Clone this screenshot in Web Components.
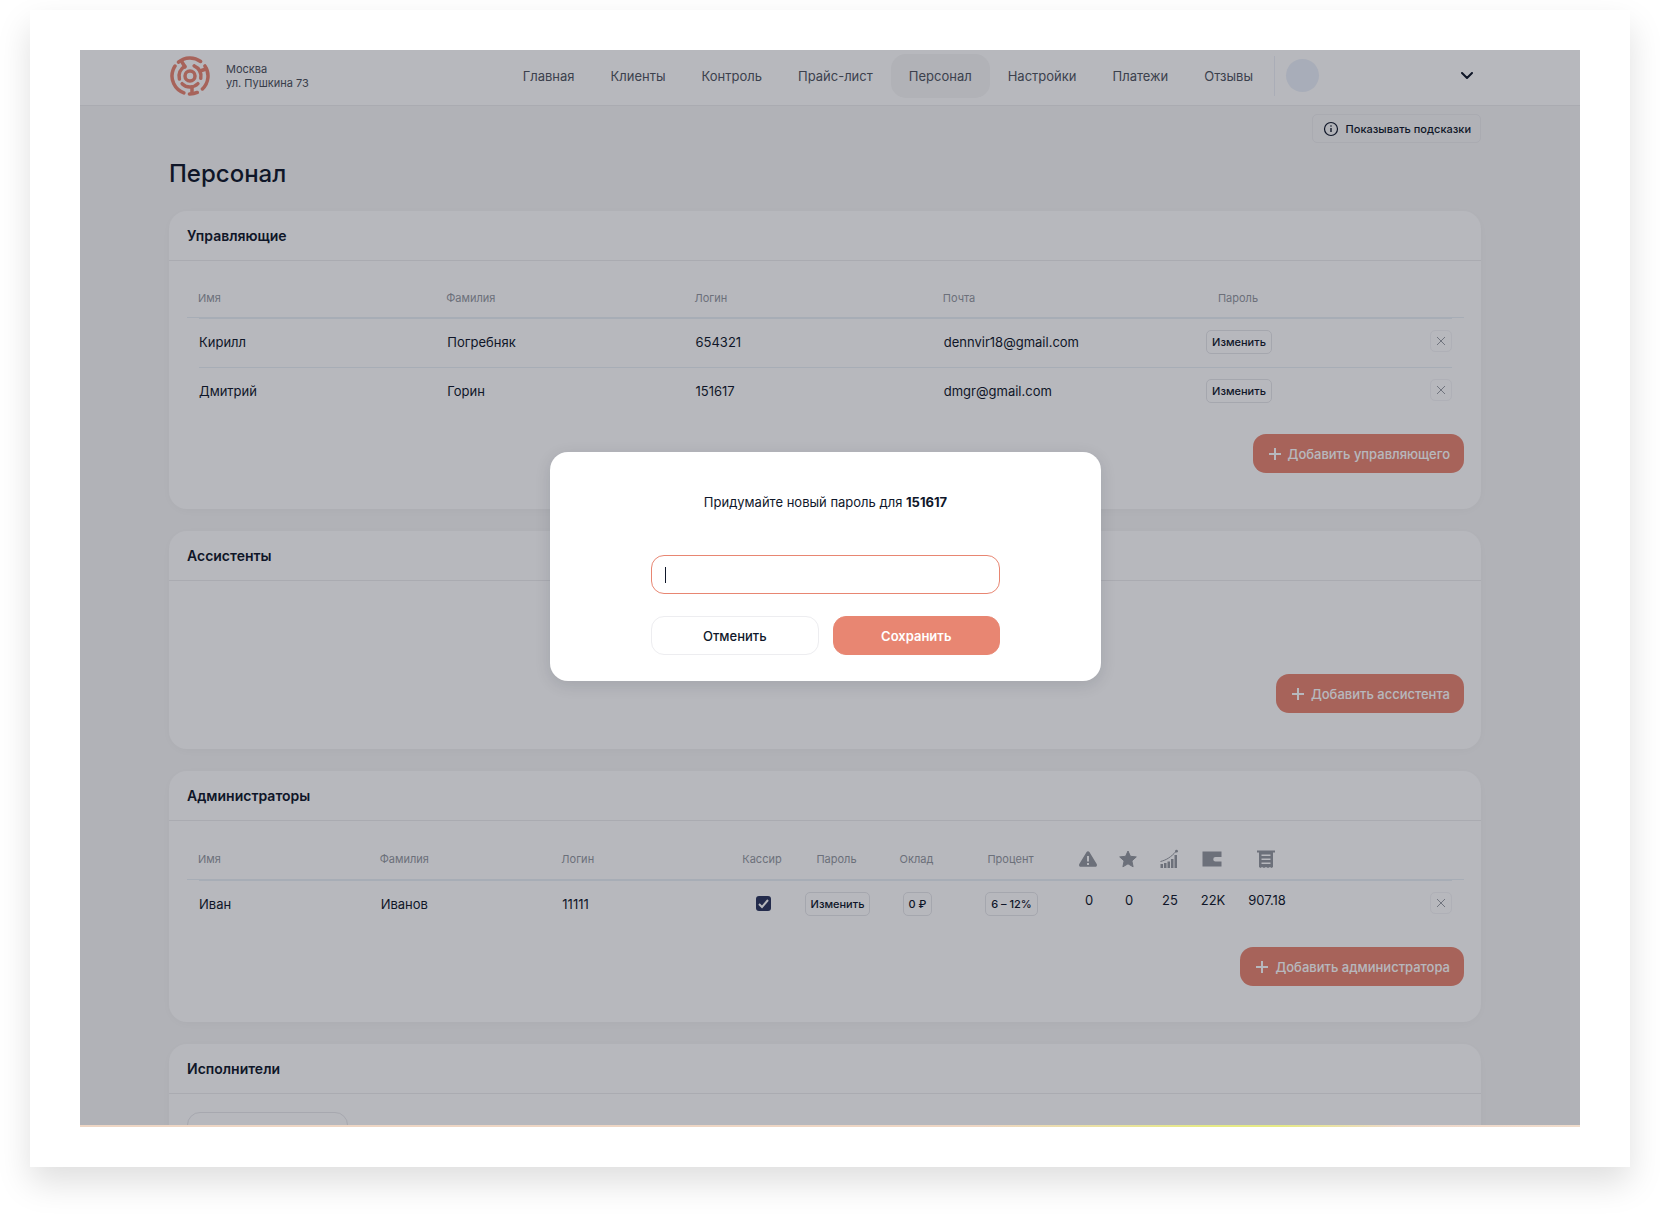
<!DOCTYPE html>
<html lang="ru">
<head>
<meta charset="utf-8">
<meta name="viewport" content="width=device-width, initial-scale=1">
<title>Персонал</title>
<style>
  :root {
    --ink: #0f172a;
    --muted: #94989f;
    --line: #ececee;
    --row-line: #e9eff5;
    --accent: #e88672;
  }

  body {
    margin: 0;
    background: #fff;
    color: var(--ink);
    font: 13px/20px Inter, "Noto Sans", sans-serif;
  }
</style>
</head>
<body>
<app-frame>
  <top-bar city="Москва" street="ул. Пушкина 73">
    <nav-item>Главная</nav-item>
    <nav-item>Клиенты</nav-item>
    <nav-item>Контроль</nav-item>
    <nav-item>Прайс-лист</nav-item>
    <nav-item active>Персонал</nav-item>
    <nav-item>Настройки</nav-item>
    <nav-item>Платежи</nav-item>
    <nav-item>Отзывы</nav-item>
  </top-bar>

  <staff-page heading="Персонал">
    <staff-card heading="Управляющие">
      <manager-table></manager-table>
      <add-button slot="action">Добавить управляющего</add-button>
    </staff-card>
    <staff-card heading="Ассистенты" empty>
      <add-button slot="action">Добавить ассистента</add-button>
    </staff-card>
    <staff-card heading="Администраторы">
      <admin-table></admin-table>
      <add-button slot="action">Добавить администратора</add-button>
    </staff-card>
    <staff-card heading="Исполнители">
      <search-field></search-field>
    </staff-card>
  </staff-page>

  <password-dialog slot="dialog" login="151617"></password-dialog>
</app-frame>

<script>
const closeIcon = `
  <svg width="10" height="10" viewBox="0 0 10 10" fill="none" stroke="currentColor" aria-hidden="true">
    <path d="M1 1l8 8M9 1L1 9"/>
  </svg>`;

const tableStyles = `
  :host { display: block; }

  table, thead, tbody { display: block; }

  tr {
    display: grid;
    grid-template-columns: var(--columns);
    align-items: center;
  }

  thead tr {
    height: var(--head-height, 38px);
    padding: 0 13px 0 11px;
    border-bottom: 1px solid var(--row-line);
  }

  tbody tr {
    height: 45px;
    margin: 0 12px;
    padding-bottom: 3px;
    border-top: 1px solid var(--row-line);
  }

  th, td {
    padding: 0;
    text-align: left;
    white-space: nowrap;
  }

  th {
    color: var(--muted);
    font-size: 11px;
    font-weight: 400;
  }

  th svg { display: block; margin: 0 auto; }

  .center { justify-self: center; text-align: center; }
  .end { justify-self: end; padding-bottom: 2px; }

  button {
    display: block;
    box-sizing: border-box;
    height: 24px;
    padding: 0 5px;
    border: 1px solid #e6e7ea;
    border-radius: 5px;
    background: none;
    color: var(--ink);
    font: 500 11px/20px Inter, "Noto Sans", sans-serif;
  }

  button.remove {
    display: grid;
    place-items: center;
    width: 22px;
    height: 22px;
    padding: 0;
    border-color: #f4f4f6;
    color: #9a9ea5;
  }
`;

class AppFrame extends HTMLElement {
  constructor() {
    super();
    this.attachShadow({ mode: 'open' }).innerHTML = `
      <style>
        :host {
          display: block;
          box-sizing: border-box;
          height: calc(100vh - 60px);
          margin: 10px 30px 50px;
          padding: 40px 50px;
          background: #fff;
          box-shadow: 0 16px 32px rgba(0, 0, 0, .13);
        }

        .screen {
          position: relative;
          box-sizing: border-box;
          height: 100%;
          overflow: hidden;
          background: #f7f7f7;
        }

        .overlay {
          position: absolute;
          inset: 0;
          display: grid;
          place-items: center;
          padding: 0 9px 44px 0;
          background: rgba(15, 20, 36, .3);
        }

        .strip {
          position: absolute;
          inset: auto 0 0 0;
          height: 2px;
          background: linear-gradient(90deg, #eed6c4 0%, #eed6c4 60%, #e6ea86 75%, #e6ea86 80%, #eed8cc 88%, #f0dccb 100%);
        }
      </style>
      <div class="screen">
        <slot></slot>
        <div class="overlay"><slot name="dialog"></slot></div>
        <div class="strip"></div>
      </div>
    `;
  }
}

class TopBar extends HTMLElement {
  constructor() {
    super();
    this.attachShadow({ mode: 'open' }).innerHTML = `
      <style>
        :host { display: block; }

        header {
          display: flex;
          align-items: center;
          height: 51px;
          padding: 0 99px 4px 90px;
          border-bottom: 1px solid var(--line);
          background: #fff;
        }

        .logo { flex: none; color: #e88672; }

        address {
          flex: 1;
          margin-left: 16px;
          color: #4a4f5a;
          font-size: 11px;
          font-style: normal;
          line-height: 14px;
        }

        nav { display: flex; margin-right: 3px; }

        .user {
          display: flex;
          align-items: center;
          box-sizing: border-box;
          width: 207px;
          height: 40px;
          padding: 0 8px 0 11px;
          border: 0;
          border-left: 1px solid #eceff6;
          background: none;
          color: var(--ink);
        }

        .avatar {
          width: 33px;
          height: 33px;
          margin-right: auto;
          border-radius: 50%;
          background: #eaf0f9;
        }
      </style>
      <header>
        <svg class="logo" width="40" height="40" viewBox="0 0 40 40" fill="none" stroke="currentColor" stroke-width="3.5" aria-hidden="true">
          <circle cx="20" cy="20" r="5"/>
          <g stroke-linecap="round">
            <circle cx="20" cy="20" r="11" pathLength="360" stroke-dasharray="78 282" transform="rotate(164 20 20)"/>
            <circle cx="20" cy="20" r="11" pathLength="360" stroke-dasharray="80 280" transform="rotate(-68 20 20)"/>
            <circle cx="20" cy="20" r="11" pathLength="360" stroke-dasharray="92 268" transform="rotate(44 20 20)"/>
            <circle cx="20" cy="20" r="18" pathLength="360" stroke-dasharray="76 284" transform="rotate(-130 20 20)"/>
            <circle cx="20" cy="20" r="18" pathLength="360" stroke-dasharray="80 280" transform="rotate(-34 20 20)"/>
            <circle cx="20" cy="20" r="18" pathLength="360" stroke-dasharray="26 334" transform="rotate(66 20 20)"/>
            <circle cx="20" cy="20" r="18" pathLength="360" stroke-dasharray="104 256" transform="rotate(110 20 20)"/>
            <path d="M22 31v6M12 6l3 5M30 15l6-2"/>
          </g>
        </svg>
        <address></address>
        <nav><slot></slot></nav>
        <button class="user" type="button" aria-label="Профиль">
          <span class="avatar"></span>
          <svg width="12" height="8" viewBox="0 0 12 8" fill="none" stroke="currentColor" stroke-width="2" stroke-linecap="round" stroke-linejoin="round" aria-hidden="true">
            <path d="M1 1l5 5 5-5"/>
          </svg>
        </button>
      </header>
    `;
  }

  connectedCallback() {
    const address = this.shadowRoot.querySelector('address');
    address.innerHTML = '<div></div><div></div>';
    address.children[0].textContent = this.getAttribute('city');
    address.children[1].textContent = this.getAttribute('street');
  }
}

class NavItem extends HTMLElement {
  constructor() {
    super();
    this.attachShadow({ mode: 'open' }).innerHTML = `
      <style>
        :host { display: block; }

        a {
          display: block;
          padding: 0 18px;
          border-radius: 15px;
          color: #50555f;
          line-height: 44px;
          text-decoration: none;
          white-space: nowrap;
        }

        :host([active]) a { background: #f6f6f6; }
      </style>
      <a href="#"><slot></slot></a>
    `;
  }
}

class StaffPage extends HTMLElement {
  constructor() {
    super();
    this.attachShadow({ mode: 'open' }).innerHTML = `
      <style>
        :host {
          display: block;
          padding: 8px 99px 0 89px;
        }

        .hint {
          display: flex;
          align-items: center;
          gap: 7px;
          box-sizing: border-box;
          height: 29px;
          margin-left: auto;
          padding: 0 9px 0 10px;
          border: 1px solid var(--line);
          border-radius: 5px;
          background: none;
          color: var(--ink);
          font: 500 11px/20px Inter, "Noto Sans", sans-serif;
        }

        h1 {
          margin: 15px 0 21px;
          font-size: 24px;
          font-weight: 500;
          line-height: 32px;
        }

        .cards { display: grid; gap: 22px; }
      </style>
      <button class="hint" type="button">
        <svg width="16" height="16" viewBox="0 0 16 16" fill="none" stroke="currentColor" aria-hidden="true">
          <circle cx="8" cy="8" r="6.5" stroke-width="1.2"/>
          <path d="M8 7v4" stroke-width="1.4"/>
          <circle cx="8" cy="5" r=".8" fill="currentColor" stroke="none"/>
        </svg>
        Показывать подсказки
      </button>
      <h1></h1>
      <div class="cards"><slot></slot></div>
    `;
  }

  connectedCallback() {
    this.shadowRoot.querySelector('h1').textContent = this.getAttribute('heading');
  }
}

class StaffCard extends HTMLElement {
  constructor() {
    super();
    this.attachShadow({ mode: 'open' }).innerHTML = `
      <style>
        :host {
          display: block;
          border-radius: 18px;
          background: #fff;
          box-shadow: 0 2px 14px rgba(0, 0, 0, .03);
        }

        h2 {
          margin: 0;
          padding: 15px 18px 14px;
          border-bottom: 1px solid var(--line);
          font-size: 14px;
          font-weight: 600;
          line-height: 20px;
        }

        .body { padding: 18px 17px 0 18px; }
        :host([empty]) .body { padding-top: 75px; }

        .action {
          display: flex;
          justify-content: flex-end;
          padding: 18px 17px 36px;
        }
      </style>
      <h2></h2>
      <div class="body"><slot></slot></div>
      <div class="action"><slot name="action"></slot></div>
    `;
  }

  connectedCallback() {
    this.shadowRoot.querySelector('h2').textContent = this.getAttribute('heading');
  }
}

class AddButton extends HTMLElement {
  constructor() {
    super();
    this.attachShadow({ mode: 'open' }).innerHTML = `
      <style>
        :host { display: block; }

        button {
          display: flex;
          align-items: center;
          gap: 7px;
          height: 39px;
          padding: 0 14px 0 16px;
          border: 0;
          border-radius: 13px;
          background: var(--accent);
          color: #fff;
          font: 500 13px/20px Inter, "Noto Sans", sans-serif;
        }
      </style>
      <button type="button">
        <svg width="12" height="12" viewBox="0 0 12 12" fill="none" stroke="currentColor" stroke-width="2" aria-hidden="true">
          <path d="M6 0v12M0 6h12"/>
        </svg>
        <span><slot></slot></span>
      </button>
    `;
  }
}

class ManagerTable extends HTMLElement {
  constructor() {
    super();
    const rows = [
      ['Кирилл', 'Погребняк', '654321', 'dennvir18@gmail.com'],
      ['Дмитрий', 'Горин', '151617', 'dmgr@gmail.com']
    ];

    this.attachShadow({ mode: 'open' }).innerHTML = `
      <style>
        ${tableStyles}
        :host { --columns: repeat(4, minmax(0, 1fr)) 94px 166px; }
      </style>
      <table>
        <thead>
          <tr>
            <th>Имя</th><th>Фамилия</th><th>Логин</th><th>Почта</th>
            <th class="center">Пароль</th><th></th>
          </tr>
        </thead>
        <tbody>
          ${rows.map((row) => `
            <tr>
              ${row.map((value) => `<td>${value}</td>`).join('')}
              <td class="center"><button type="button">Изменить</button></td>
              <td class="end"><button class="remove" type="button" aria-label="Удалить">${closeIcon}</button></td>
            </tr>
          `).join('')}
        </tbody>
      </table>
    `;
  }
}

class AdminTable extends HTMLElement {
  constructor() {
    super();
    this.attachShadow({ mode: 'open' }).innerHTML = `
      <style>
        ${tableStyles}
        :host {
          --head-height: 40px;
          --columns: 182fr 182fr 179fr 44px 105px 55px 133px 22px 58px 24px 62px 46px 162px;
        }

        .stat { padding-bottom: 8px; }

        input {
          appearance: none;
          display: block;
          width: 15px;
          height: 15px;
          margin: 0;
          border-radius: 3px;
          background: #2b365e;
        }

        label { position: relative; display: block; }

        label svg {
          position: absolute;
          inset: 0;
          color: #fff;
        }
      </style>
      <table>
        <thead>
          <tr>
            <th>Имя</th><th>Фамилия</th><th>Логин</th>
            <th class="center">Кассир</th>
            <th class="center">Пароль</th>
            <th class="center">Оклад</th>
            <th class="center">Процент</th>
            <th class="center" aria-label="Предупреждения">
              <svg width="20" height="20" viewBox="0 0 20 20" fill="currentColor" aria-hidden="true">
                <path fill-rule="evenodd" d="M8.6 3.1a1.6 1.6 0 0 1 2.8 0l7.3 12a1.8 1.8 0 0 1-1.5 2.7H2.8a1.8 1.8 0 0 1-1.5-2.7zM9 7v5.5h2V7zM9 14v2h2v-2z"/>
              </svg>
            </th>
            <th class="center" aria-label="Рейтинг">
              <svg width="20" height="20" viewBox="0 0 20 20" fill="currentColor" stroke="currentColor" stroke-linejoin="round" aria-hidden="true">
                <path d="M10 2l2.4 5.3 5.9.6-4.4 4 1.2 5.9-5.1-3-5.1 3 1.2-5.9-4.4-4 5.9-.6z"/>
              </svg>
            </th>
            <th class="center" aria-label="Статистика">
              <svg width="20" height="20" viewBox="0 0 20 20" fill="currentColor" aria-hidden="true">
                <path d="M1.500 15H4v4H1.500zM5 14h2.500v5H5zM8.500 12.500H11V19H8.500zM12 10h2.500v9H12zM15.500 6H18v13h-2.500z"/>
                <path d="M1.500 12.500c6-1.500 10.500-4.500 15.500-10" fill="none" stroke="currentColor"/>
                <circle cx="17.500" cy="2.200" r="1.400"/>
              </svg>
            </th>
            <th class="center" aria-label="Кошелёк">
              <svg width="20" height="20" viewBox="0 0 20 20" fill="currentColor" aria-hidden="true">
                <path d="M.5 2.500h19v5.500H13.500a2 2 0 0 0 0 4.500h6v5H.5z"/>
              </svg>
            </th>
            <th class="center" aria-label="Чеки">
              <svg width="20" height="20" viewBox="0 0 20 20" fill="currentColor" aria-hidden="true">
                <path fill-rule="evenodd" d="M1 1.500h18v2h-2V18l-1.500 1-1.500-1-2 1-2-1-2 1-2-1-1.500 1L3 18V3.500H1zM5.500 5.500V7h9V5.500zM5.500 9.500V11h9V9.500zM5.500 13.500V15h9v-1.500z"/>
              </svg>
            </th>
            <th></th>
          </tr>
        </thead>
        <tbody>
          <tr>
            <td>Иван</td><td>Иванов</td><td>11111</td>
            <td class="center">
              <label>
                <input type="checkbox" checked aria-label="Кассир">
                <svg width="15" height="15" viewBox="0 0 15 15" fill="none" stroke="currentColor" stroke-width="2" aria-hidden="true">
                  <path d="M3 8l3 3 6-7"/>
                </svg>
              </label>
            </td>
            <td class="center"><button type="button">Изменить</button></td>
            <td class="center"><button type="button">0 ₽</button></td>
            <td class="center"><button type="button">6 – 12%</button></td>
            <td class="center stat">0</td>
            <td class="center stat">0</td>
            <td class="center stat">25</td>
            <td class="center stat">22K</td>
            <td class="center stat">907.18</td>
            <td class="end"><button class="remove" type="button" aria-label="Удалить">${closeIcon}</button></td>
          </tr>
        </tbody>
      </table>
    `;
  }
}

class SearchField extends HTMLElement {
  constructor() {
    super();
    this.attachShadow({ mode: 'open' }).innerHTML = `
      <style>
        :host { display: block; }

        input {
          display: block;
          box-sizing: border-box;
          width: 161px;
          height: 39px;
          padding: 0 13px;
          border: 1px solid #e8e8eb;
          border-radius: 13px;
          background: none;
          font: inherit;
        }
      </style>
      <input type="search" aria-label="Поиск исполнителя">
    `;
  }
}

class PasswordDialog extends HTMLElement {
  constructor() {
    super();
    this.attachShadow({ mode: 'open' }).innerHTML = `
      <style>
        :host { display: block; }

        form {
          box-sizing: border-box;
          width: 551px;
          padding: 40px 101px 26px;
          border-radius: 18px;
          background: #fff;
          box-shadow: 0 4px 16px rgba(15, 23, 42, .12);
        }

        label {
          display: block;
          margin-bottom: 43px;
          text-align: center;
          white-space: nowrap;
        }

        b { font-weight: 700; }

        input {
          display: block;
          box-sizing: border-box;
          width: 100%;
          height: 39px;
          margin-bottom: 22px;
          padding: 0 13px;
          border: 1px solid var(--accent);
          border-radius: 13px;
          outline: 0;
          /* text cursor of the active field */
          background: linear-gradient(var(--ink), var(--ink)) 13px center / 1px 16px no-repeat #fff;
          caret-color: transparent;
          font: inherit;
        }

        .actions {
          display: grid;
          grid-template-columns: 1fr 1fr;
          gap: 14px;
        }

        button {
          height: 39px;
          border: 1px solid #ededf0;
          border-radius: 13px;
          background: #fff;
          color: var(--ink);
          font: 500 13px/20px Inter, "Noto Sans", sans-serif;
        }

        button.primary {
          border-color: var(--accent);
          background: var(--accent);
          color: #fff;
          font-weight: 600;
        }
      </style>
      <form role="dialog" aria-modal="true">
        <label for="password">Придумайте новый пароль для <b></b></label>
        <input id="password" type="password" autocomplete="new-password">
        <div class="actions">
          <button type="button">Отменить</button>
          <button class="primary" type="submit">Сохранить</button>
        </div>
      </form>
    `;
  }

  connectedCallback() {
    this.shadowRoot.querySelector('b').textContent = this.getAttribute('login');
  }
}

customElements.define('app-frame', AppFrame);
customElements.define('top-bar', TopBar);
customElements.define('nav-item', NavItem);
customElements.define('staff-page', StaffPage);
customElements.define('staff-card', StaffCard);
customElements.define('add-button', AddButton);
customElements.define('manager-table', ManagerTable);
customElements.define('admin-table', AdminTable);
customElements.define('search-field', SearchField);
customElements.define('password-dialog', PasswordDialog);
</script>
</body>
</html>
